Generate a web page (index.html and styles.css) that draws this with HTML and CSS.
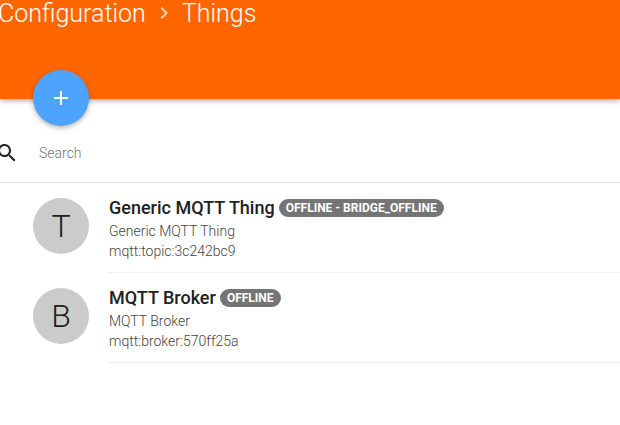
FILE: index.html
```html
<!DOCTYPE html>
<html lang="en">
<head>
    <meta charset="UTF-8">
    <title>Things</title>
    <link rel="stylesheet" href="styles.css">
</head>
<body>
    <header class="toolbar">
        <div class="crumbs">
            <span>Configuration</span>
            <svg class="crumb-sep" width="24" height="24" viewBox="0 0 24 24"><path d="M10 6L8.59 7.41 13.17 12l-4.58 4.59L10 18l6-6z"/></svg>
            <span>Things</span>
        </div>
    </header>
    <button class="fab">
        <svg width="24" height="24" viewBox="0 0 24 24"><path d="M19 13h-6v6h-2v-6H5v-2h6V5h2v6h6v2z"/></svg>
    </button>

    <div class="search">
        <svg class="search-icon" width="24" height="24" viewBox="0 0 24 24"><path d="M15.5 14h-.79l-.28-.27C15.41 12.59 16 11.11 16 9.5 16 5.91 13.09 3 9.5 3S3 5.91 3 9.5 5.91 16 9.5 16c1.61 0 3.09-.59 4.23-1.57l.27.28v.79l5 4.99L20.49 19l-4.99-5zm-6 0C7.01 14 5 11.99 5 9.5S7.01 5 9.5 5 14 7.01 14 9.5 11.99 14 9.5 14z"/></svg>
        <span class="search-text">Search</span>
    </div>

    <ul class="things">
        <li class="thing">
            <div class="avatar">T</div>
            <div class="thing-body">
                <div class="thing-title">
                    <span class="thing-name">Generic MQTT Thing</span>
                    <span class="badge">OFFLINE - BRIDGE_OFFLINE</span>
                </div>
                <div class="thing-line">Generic MQTT Thing</div>
                <div class="thing-line">mqtt:topic:3c242bc9</div>
            </div>
        </li>
        <li class="thing">
            <div class="avatar">B</div>
            <div class="thing-body">
                <div class="thing-title">
                    <span class="thing-name">MQTT Broker</span>
                    <span class="badge">OFFLINE</span>
                </div>
                <div class="thing-line">MQTT Broker</div>
                <div class="thing-line">mqtt:broker:570ff25a</div>
            </div>
        </li>
    </ul>
</body>
</html>
```

FILE: styles.css
```css
* {
    margin: 0;
    padding: 0;
    box-sizing: border-box;
}

html, body {
    height: 100%;
    overflow: hidden;
}

body {
    position: relative;
    background: #fff;
    color: #212121;
    font-family: Roboto, sans-serif;
}

.toolbar {
    height: 99px;
    background: #ff6600;
    box-shadow: 0 2px 5px rgba(0, 0, 0, 0.3);
    overflow: hidden;
}

.crumbs {
    display: flex;
    align-items: center;
    gap: 6px;
    margin: -3px 0 0 -2px;
    height: 32px;
    color: #fff;
    font-size: 25px;
    font-weight: 300;
}

.crumb-sep {
    fill: rgba(255, 255, 255, 0.7);
}

.fab {
    position: absolute;
    left: 33px;
    top: 70px;
    display: flex;
    align-items: center;
    justify-content: center;
    width: 56px;
    height: 56px;
    border: none;
    border-radius: 50%;
    background: #4da3ff;
    box-shadow: 0 2px 5px rgba(0, 0, 0, 0.3);
}

.fab svg {
    fill: #fff;
}

.search {
    display: flex;
    align-items: center;
    height: 84px;
    padding-top: 24px;
    border-bottom: 1px solid #e0e0e0;
}

.search-icon {
    flex: none;
    margin-left: -5px;
    fill: #212121;
}

.search-text {
    margin-left: 20px;
    padding-top: 1px;
    color: #757575;
    font-size: 14px;
    font-weight: 300;
}

.things {
    list-style: none;
}

.thing {
    display: flex;
    height: 90px;
    padding-left: 33px;
}

.avatar {
    flex: none;
    display: flex;
    align-items: center;
    justify-content: center;
    width: 56px;
    height: 56px;
    margin-top: 15px;
    border-radius: 50%;
    background: #cbcbcb;
    font-size: 32px;
    font-weight: 300;
}

.thing-body {
    flex: 1;
    margin-left: 20px;
    padding-top: 12px;
    border-bottom: 1px solid #eeeeee;
}

.thing-title {
    display: flex;
    align-items: center;
    gap: 4px;
    height: 24px;
    margin-bottom: 2px;
}

.thing-name {
    font-size: 18px;
    font-weight: 500;
}

.badge {
    margin-top: 2px;
    padding: 0 7px;
    height: 18px;
    line-height: 18px;
    border-radius: 9px;
    background: #757575;
    color: #fff;
    font-size: 12px;
    font-weight: 700;
}

.thing-line {
    height: 20px;
    line-height: 20px;
    color: #444;
    font-size: 14px;
    font-weight: 300;
}
```
